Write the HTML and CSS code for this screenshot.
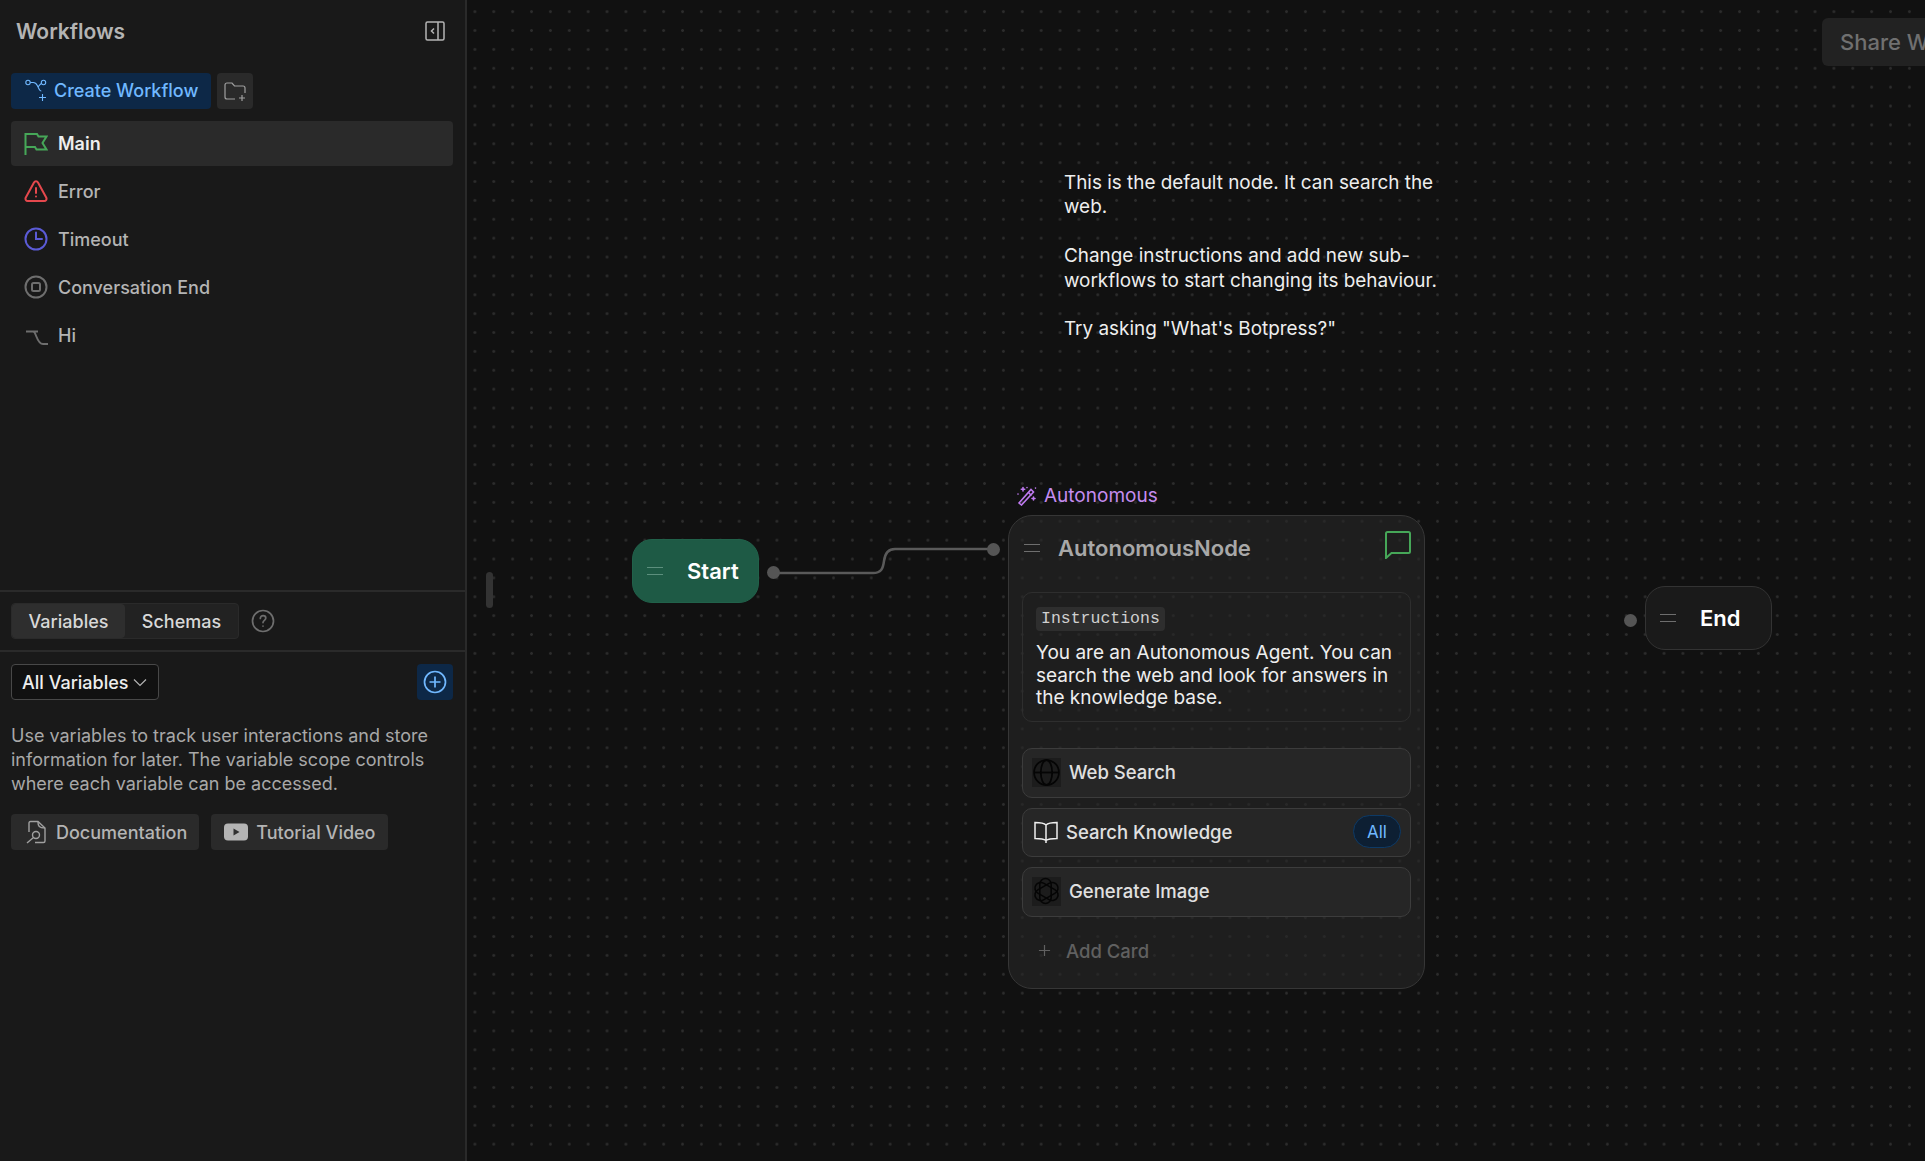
FILE: index.html
```html
<!DOCTYPE html>
<html lang="en">
<head>
  <meta charset="UTF-8">
  <title>Workflows</title>
  <link rel="stylesheet" href="styles.css">
</head>
<body>

<!-- Sidebar -->
<aside class="sidebar">
  <div class="sidebar-top">
    <div class="sidebar-head">
      <h1 class="sidebar-title">Workflows</h1>
      <svg class="icon-20" viewBox="0 0 20 20" fill="none" stroke="#b4b4b4" stroke-width="1.5"><rect x="1" y="1" width="18" height="18" rx="1.5"/><path d="M13 1v18M9 7.5 6.5 10 9 12.500"/></svg>
    </div>
    <div class="create-row">
      <button class="create-btn">
        <svg class="icon-24" viewBox="0 0 24 24" fill="none" stroke="#70b8ff" stroke-width="1.1"><circle cx="4" cy="4.500" r="2.200"/><circle cx="19.500" cy="4.500" r="2.200"/><path d="M6.300 4.500h3c2 0 3 1 4 3l2 4c.5 1 1.300 1.500 2 1.500M17.300 5.500c-1.500 1-2.500 2.200-3.200 3.500M18.500 16v7M15 19.500h7"/></svg>
        Create Workflow
      </button>
      <button class="folder-btn">
        <svg class="icon-24" viewBox="0 0 24 24" fill="none" stroke="#a0a0a0" stroke-width="1.200"><path d="M12 20H4c-1.200 0-2-.8-2-2V6c0-1.200.8-2 2-2h5l2.500 3H20c1.200 0 2 .8 2 2v5M19 16v6M16 19h6"/></svg>
      </button>
    </div>
    <ul class="flow-list">
      <li class="flow-item active">
        <svg class="icon-24" viewBox="0 0 24 24" fill="none" stroke="#46a758" stroke-width="2"><path d="M1.500 23V2h11.500l1.500 2.500h8L18.500 11l4 6.500H12.500L11 15H1.500"/></svg>
        Main
      </li>
      <li class="flow-item">
        <svg class="icon-24" viewBox="0 0 24 24" fill="none" stroke="#e5484d" stroke-width="2" stroke-linecap="round" stroke-linejoin="round"><path d="M10 3.500 1.800 18.500c-.9 1.700.2 3.500 2 3.500h16.400c1.800 0 2.900-1.800 2-3.500L14 3.500c-.9-1.700-3.100-1.700-4 0zM12 9v5M12 17.500v.1"/></svg>
        Error
      </li>
      <li class="flow-item">
        <svg class="icon-24" viewBox="0 0 24 24" fill="none" stroke="#5b5bd6" stroke-width="2" stroke-linecap="round"><circle cx="12" cy="12" r="10.500"/><path d="M12 5.500V12h6"/></svg>
        Timeout
      </li>
      <li class="flow-item">
        <svg class="icon-24" viewBox="0 0 24 24" fill="none" stroke="#6e6e6e" stroke-width="2"><circle cx="12" cy="12" r="10.500"/><rect x="8" y="8" width="8" height="8" rx="1.500"/></svg>
        Conversation End
      </li>
      <li class="flow-item">
        <svg class="icon-24 icon-hi" viewBox="0 0 24 24" fill="none" stroke="#6e6e6e" stroke-width="1.800"><path d="M2 8.500h12M9 8.500c3.500 0 3.500 12.500 10 12.500h5"/></svg>
        Hi
      </li>
    </ul>
  </div>

  <div class="tabs-row">
    <div class="tabs">
      <span class="tab selected">Variables</span>
      <span class="tab">Schemas</span>
    </div>
    <svg class="icon-24 help" viewBox="0 0 24 24" fill="none" stroke="#6e6e6e" stroke-width="1.700" stroke-linecap="round"><circle cx="12" cy="12" r="10.500"/><path d="M9.300 9.500c0-1.700 1.200-2.800 2.800-2.800s2.700 1 2.700 2.400c0 2.200-2.800 2.300-2.800 4.500M12 17v.1"/></svg>
  </div>

  <div class="vars">
    <div class="vars-head">
      <button class="vars-select">All Variables
        <svg class="chevron" viewBox="0 0 16 16" fill="none" stroke="#b4b4b4" stroke-width="1.200"><path d="M2 5.500 8 11.500l6-6"/></svg>
      </button>
      <button class="add-btn">
        <svg class="icon-24" viewBox="0 0 24 24" fill="none" stroke="#70b8ff" stroke-width="1.700"><circle cx="12" cy="12" r="10.500"/><path d="M12 6.500v11M6.500 12h11"/></svg>
      </button>
    </div>
    <p class="vars-text">Use variables to track user interactions and store information for later. The variable scope controls where each variable can be accessed.</p>
    <div class="vars-links">
      <button class="link-btn">
        <svg class="icon-24" viewBox="0 0 24 24" fill="none" stroke="#a0a0a0" stroke-width="1.400"><path d="M5 12V3c0-.8.5-1.500 1.500-1.500H14l7 6.500v13c0 .8-.6 1.500-1.500 1.500H11"/><path d="M14 2c0 4 1 6 7 6"/><circle cx="12" cy="15" r="3.500"/><path d="M9.500 17.500 3 23"/></svg>
        Documentation
      </button>
      <button class="link-btn">
        <svg class="icon-24" viewBox="0 0 24 24"><rect y="3.500" width="24" height="17" rx="4" fill="#b4b4b4"/><path d="M9.500 8.500v7l6-3.500z" fill="#313131"/></svg>
        Tutorial Video
      </button>
    </div>
  </div>
</aside>

<!-- Canvas -->
<main class="canvas">
  <div class="resize-handle"></div>
  <button class="share-btn">Share Workflow</button>

  <div class="note">
    <p>This is the default node. It can search the web.</p>
    <p>Change instructions and add new sub-workflows to start changing its behaviour.</p>
    <p>Try asking "What's Botpress?"</p>
  </div>

  <svg class="wire" width="240" height="40" viewBox="0 0 240 40" fill="none">
    <path d="M0 30h100c8 0 10-4 11-12 1-8 4-12 11-12h98" stroke="#5a5a5a" stroke-width="2.500"/>
  </svg>
  <span class="handle handle-start"></span>
  <span class="handle handle-in"></span>
  <span class="handle handle-end"></span>

  <div class="node start-node">
    <span class="drag"></span>
    <span class="node-name">Start</span>
  </div>

  <div class="node-tag">
    <svg class="icon-20" viewBox="0 0 20 20" fill="none" stroke="#bf7af0" stroke-width="1.600" stroke-linecap="round"><path d="M2 17 14 3.500l2.500 2.500L4.500 19z"/><path d="M11.500 6.500 14 9M6 1.500V5M4.300 3.200h3.400M16.500 11v3M15 12.500h3M1 8v.1M10 1.500v.1M18.500 2v.1"/></svg>
    Autonomous
  </div>

  <div class="auto-node">
    <div class="auto-head">
      <span class="drag"></span>
      <span class="auto-title">AutonomousNode</span>
      <svg class="comment" viewBox="0 0 26 28" fill="none" stroke="#46a758" stroke-width="2"><path d="M1 2.500C1 1.700 1.700 1 2.500 1h21c.8 0 1.500.7 1.500 1.500v18c0 .8-.7 1.500-1.500 1.500H6.500L1 27z"/></svg>
    </div>
    <div class="instructions">
      <code class="instr-tag">Instructions</code>
      <p class="instr-text">You are an Autonomous Agent. You can search the web and look for answers in the knowledge base.</p>
    </div>
    <div class="cards">
      <div class="card">
        <span class="card-icon">
          <svg viewBox="0 0 28 28" fill="none" stroke="#050505" stroke-width="1.700"><circle cx="14" cy="14" r="12"/><ellipse cx="14" cy="14" rx="5.500" ry="12"/><path d="M2 14h24"/></svg>
        </span>
        Web Search
      </div>
      <div class="card card-book">
        <svg class="icon-24" viewBox="0 0 24 24" fill="none" stroke="#eee" stroke-width="1.500"><path d="M12 5C10 3 7 2.500 1 2.500v16c6 0 9 .5 11 2 2-1.500 5-2 11-2v-16c-6 0-9 .5-11 2.500zM12 5v18"/></svg>
        Search Knowledge
        <span class="pill">All</span>
      </div>
      <div class="card">
        <span class="card-icon">
          <svg viewBox="0 0 28 28" fill="none" stroke="#050505" stroke-width="1.500"><rect x="7.500" y="1.500" width="11" height="24" rx="5.500"/><rect x="8.500" y="2" width="11" height="24" rx="5.500" transform="rotate(60 14 14)"/><rect x="8.500" y="2" width="11" height="24" rx="5.500" transform="rotate(-60 14 14)"/></svg>
        </span>
        Generate Image
      </div>
      <div class="add-card">
        <svg class="plus" viewBox="0 0 14 14" fill="none" stroke="#606060" stroke-width="1.300"><path d="M7 1v12M1 7h12"/></svg>
        Add Card
      </div>
    </div>
  </div>

  <div class="node end-node">
    <span class="drag"></span>
    <span class="node-name">End</span>
  </div>
</main>

</body>
</html>
```

FILE: styles.css
```css
* {
  box-sizing: border-box;
}

html, body {
  height: 100%;
}

body {
  margin: 0;
  display: flex;
  overflow: hidden;
  background: #111;
  color: #eee;
  font-family: "Inter", "Liberation Sans", sans-serif;
  font-size: 18px;
}

button {
  font: inherit;
  border: none;
  cursor: pointer;
}

.icon-20 {
  width: 20px;
  height: 20px;
  flex: none;
}

.icon-24 {
  width: 24px;
  height: 24px;
  flex: none;
}

/* Sidebar */
.sidebar {
  width: 467px;
  flex: none;
  height: 100%;
  background: #191919;
  border-right: 2px solid #2a2a2a;
  display: flex;
  flex-direction: column;
}

.sidebar-top {
  height: 592px;
  padding: 0 12px 0 11px;
  border-bottom: 2px solid #2a2a2a;
}

.sidebar-head {
  height: 62px;
  padding: 0 8px 0 5px;
  display: flex;
  align-items: center;
  justify-content: space-between;
}

.sidebar-title {
  margin: 0;
  font-size: 21px;
  font-weight: 600;
  color: #b4b4b4;
}

.create-row {
  margin-top: 11px;
  display: flex;
  gap: 6px;
}

.create-btn {
  width: 200px;
  height: 36px;
  padding: 0 13px 2px;
  display: flex;
  align-items: center;
  gap: 6px;
  background: #0d2847;
  color: #70b8ff;
  border-radius: 4px;
  font-weight: 500;
  white-space: nowrap;
}

.folder-btn {
  width: 36px;
  height: 36px;
  background: #2a2a2a;
  border-radius: 4px;
  padding: 6px;
}

.flow-list {
  list-style: none;
  margin: 12px 0 0;
  padding: 0;
}

.flow-item {
  height: 48px;
  padding: 0 13px;
  display: flex;
  align-items: center;
  gap: 10px;
  color: #b4b4b4;
  font-weight: 500;
  border-radius: 4px;
}

.flow-item.active {
  height: 45px;
  margin-bottom: 1px;
  background: #2a2a2a;
  color: #eee;
  font-weight: 600;
}

.tabs-row {
  height: 60px;
  padding: 0 11px;
  display: flex;
  align-items: center;
  gap: 12px;
  border-bottom: 2px solid #2a2a2a;
}

.tabs {
  display: flex;
  height: 36px;
  border: 1px solid #2a2a2a;
  border-radius: 4px;
  background: #222;
}

.tab {
  width: 113px;
  display: flex;
  align-items: center;
  justify-content: center;
  font-weight: 500;
  color: #d8d8d8;
}

.tab.selected {
  background: #2e2e2e;
  border-radius: 4px;
}

.vars {
  padding: 12px 12px 0 11px;
}

.vars-head {
  display: flex;
  justify-content: space-between;
}

.vars-select {
  width: 148px;
  height: 36px;
  padding: 0 10px;
  display: flex;
  align-items: center;
  justify-content: space-between;
  background: #111;
  border: 1px solid #484848;
  border-radius: 4px;
  color: #eee;
  font-weight: 500;
  white-space: nowrap;
}

.chevron {
  width: 16px;
  height: 16px;
}

.add-btn {
  width: 36px;
  height: 36px;
  padding: 6px;
  background: #0d2847;
  border-radius: 4px;
}

.vars-text {
  margin: 24px 0 0;
  width: 430px;
  line-height: 24px;
  color: #a8a8a8;
}

.vars-links {
  margin-top: 18px;
  display: flex;
  gap: 12px;
}

.link-btn {
  height: 36px;
  padding: 0 12px 0 13px;
  display: flex;
  align-items: center;
  gap: 8px;
  background: #2a2a2a;
  color: #b4b4b4;
  border-radius: 4px;
  font-weight: 500;
  white-space: nowrap;
}

/* Canvas */
.canvas {
  flex: 1;
  position: relative;
  overflow: hidden;
  background-color: #111;
  background-image: radial-gradient(circle, #2c2c2c 1.2px, transparent 1.6px);
  background-size: 18.88px 18.88px;
  background-position: -1.54px 2.23px;
}

.resize-handle {
  position: absolute;
  left: 19px;
  top: 572px;
  width: 7px;
  height: 36px;
  background: #333;
  border-radius: 4px;
}

.share-btn {
  position: absolute;
  left: 1355px;
  top: 18px;
  height: 48px;
  padding: 0 18px;
  background: #222;
  color: #707070;
  border-radius: 6px;
  font-size: 22px;
  font-weight: 500;
  white-space: nowrap;
}

.note {
  position: absolute;
  left: 597px;
  top: 171px;
  width: 385px;
  font-size: 18.900px;
  line-height: 24.400px;
  color: #eee;
}

.note p {
  margin: 0 0 24.400px;
}

.wire {
  position: absolute;
  left: 306px;
  top: 543px;
}

.handle {
  position: absolute;
  width: 13px;
  height: 13px;
  border-radius: 50%;
  background: #555;
}

.handle-start {
  left: 300px;
  top: 566px;
}

.handle-in {
  left: 520px;
  top: 543px;
}

.handle-end {
  left: 1157px;
  top: 614px;
}

.node {
  position: absolute;
  display: flex;
  align-items: center;
  border-radius: 20px;
}

.start-node {
  left: 165px;
  top: 539px;
  width: 127px;
  height: 64px;
  padding-left: 14px;
  background: #1e5a45;
  border: 1px solid #21614a;
}

.end-node {
  left: 1178px;
  top: 586px;
  width: 127px;
  height: 64px;
  padding-left: 14px;
  background: #1a1a1a;
  border: 1px solid #333;
}

.drag {
  width: 16px;
  height: 8px;
  flex: none;
  border-top: 1.500px solid #6e6e6e;
  border-bottom: 1.500px solid #6e6e6e;
}

.start-node .drag {
  border-color: #5c8f7d;
}

.node-name {
  margin-left: 24px;
  font-size: 22px;
  font-weight: 600;
  color: #fff;
}

.node-tag {
  position: absolute;
  left: 550px;
  top: 484px;
  display: flex;
  align-items: center;
  gap: 7px;
  font-size: 19px;
  color: #c58cf0;
}

.auto-node {
  position: absolute;
  left: 541px;
  top: 515px;
  width: 417px;
  height: 474px;
  padding: 0 13px;
  background: rgba(38, 38, 38, 0.62);
  border: 1px solid #363636;
  border-radius: 24px;
}

.auto-head {
  height: 64px;
  margin-bottom: 12px;
  display: flex;
  align-items: center;
  padding-left: 2px;
}

.auto-title {
  margin-left: 18px;
  font-size: 22px;
  font-weight: 600;
  color: #a8a8a8;
}

.comment {
  width: 26px;
  height: 28px;
  margin-left: auto;
  margin-top: -6px;
}

.instructions {
  height: 130px;
  padding: 13px 13px 0;
  border: 1px solid #2e2e2e;
  border-radius: 10px;
}

.instr-tag {
  display: inline-block;
  height: 24px;
  padding: 0 5px;
  background: #2e2e2e;
  border-radius: 4px;
  font-family: "Liberation Mono", monospace;
  font-size: 16.500px;
  line-height: 24px;
  color: #d0d0d0;
}

.instr-text {
  margin: 11px 0 0;
  font-size: 19px;
  line-height: 22.500px;
  color: #eee;
}

.cards {
  margin-top: 26px;
  display: flex;
  flex-direction: column;
  gap: 10px;
}

.card {
  height: 49.500px;
  padding: 0 9px 1px;
  display: flex;
  align-items: center;
  gap: 8px;
  background: #262626;
  border: 1px solid #3c3c3c;
  border-radius: 10px;
  font-size: 18.500px;
  font-weight: 500;
  color: #e0e0e0;
}

.card-icon {
  width: 29px;
  height: 29px;
  background: #1c1c1c;
  flex: none;
}

.card-icon svg {
  display: block;
  width: 29px;
  height: 29px;
}

.card-book {
  padding-left: 11px;
}

.pill {
  margin-left: auto;
  width: 48px;
  height: 33px;
  display: flex;
  align-items: center;
  justify-content: center;
  background: #0d1f33;
  border: 1px solid #0d3a66;
  border-radius: 17px;
  font-size: 17px;
  font-weight: 400;
  color: #70b8ff;
}

.add-card {
  height: 48px;
  padding-left: 16px;
  display: flex;
  align-items: center;
  gap: 15px;
  font-size: 18.500px;
  font-weight: 500;
  color: #606060;
}

.plus {
  width: 13px;
  height: 13px;
}
```
